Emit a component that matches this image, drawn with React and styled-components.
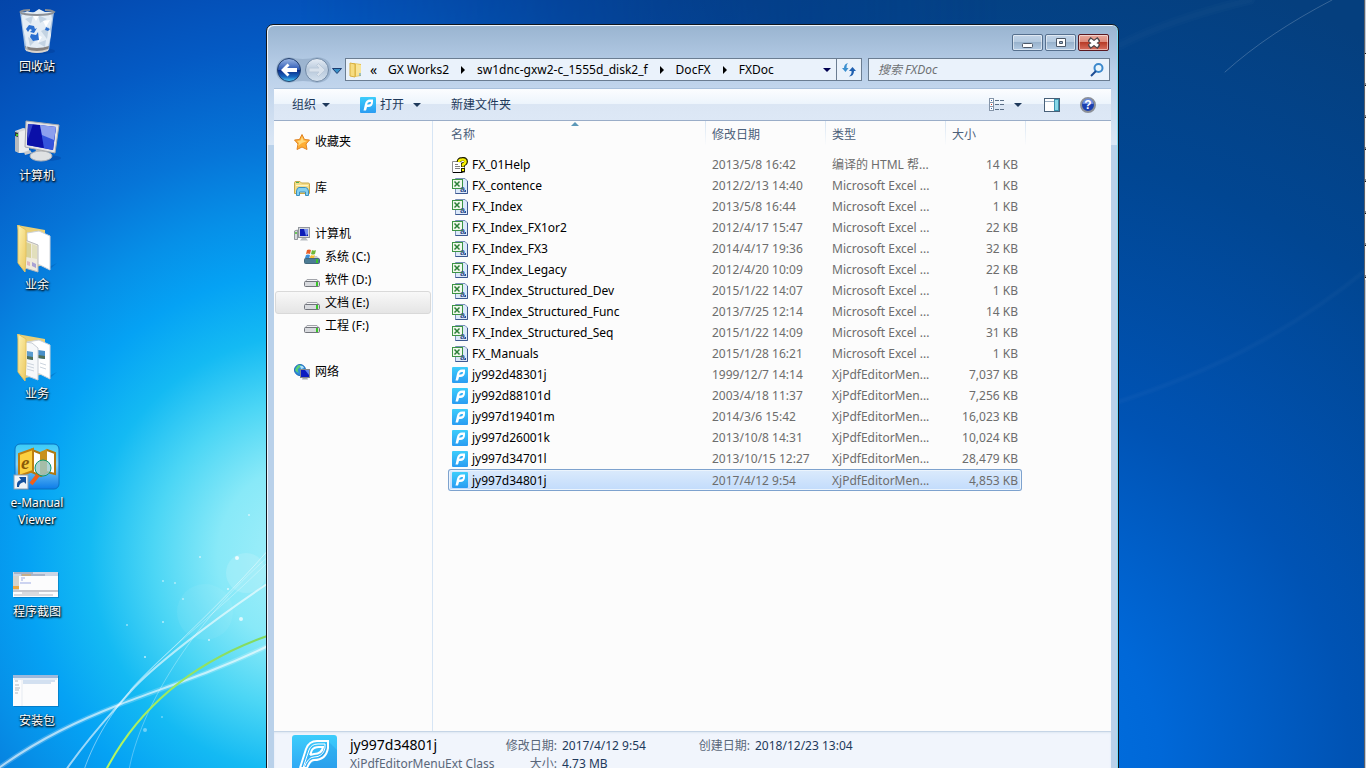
import React from 'react'
import styled, { createGlobalStyle, css } from 'styled-components';

const excel = 'Microsoft Excel ...';
const pdf = 'XjPdfEditorMen...';

const files = [
    { icon: 'help', name: 'FX_01Help', date: '2013/5/8 16:42', type: '编译的 HTML 帮...', size: '14 KB' },
    { icon: 'excel', name: 'FX_contence', date: '2012/2/13 14:40', type: excel, size: '1 KB' },
    { icon: 'excel', name: 'FX_Index', date: '2013/5/8 16:44', type: excel, size: '1 KB' },
    { icon: 'excel', name: 'FX_Index_FX1or2', date: '2012/4/17 15:47', type: excel, size: '22 KB' },
    { icon: 'excel', name: 'FX_Index_FX3', date: '2014/4/17 19:36', type: excel, size: '32 KB' },
    { icon: 'excel', name: 'FX_Index_Legacy', date: '2012/4/20 10:09', type: excel, size: '22 KB' },
    { icon: 'excel', name: 'FX_Index_Structured_Dev', date: '2015/1/22 14:07', type: excel, size: '1 KB' },
    { icon: 'excel', name: 'FX_Index_Structured_Func', date: '2013/7/25 12:14', type: excel, size: '14 KB' },
    { icon: 'excel', name: 'FX_Index_Structured_Seq', date: '2015/1/22 14:09', type: excel, size: '31 KB' },
    { icon: 'excel', name: 'FX_Manuals', date: '2015/1/28 16:21', type: excel, size: '1 KB' },
    { icon: 'pdf', name: 'jy992d48301j', date: '1999/12/7 14:14', type: pdf, size: '7,037 KB' },
    { icon: 'pdf', name: 'jy992d88101d', date: '2003/4/18 11:37', type: pdf, size: '7,256 KB' },
    { icon: 'pdf', name: 'jy997d19401m', date: '2014/3/6 15:42', type: pdf, size: '16,023 KB' },
    { icon: 'pdf', name: 'jy997d26001k', date: '2013/10/8 14:31', type: pdf, size: '10,024 KB' },
    { icon: 'pdf', name: 'jy997d34701l', date: '2013/10/15 12:27', type: pdf, size: '28,479 KB' },
    { icon: 'pdf', name: 'jy997d34801j', date: '2017/4/12 9:54', type: pdf, size: '4,853 KB' },
];

const crumbs = ['GX Works2', 'sw1dnc-gxw2-c_1555d_disk2_f', 'DocFX', 'FXDoc'];

/* ---------- drawings ---------- */

const Wallpaper = () => (
    <WallpaperSvg viewBox="0 0 1366 768" preserveAspectRatio="none" aria-hidden="true">
        <defs>
            <radialGradient id="glow" gradientUnits="userSpaceOnUse" cx="310" cy="555" r="710">
                <stop offset="0" stopColor="#a8f0fa" />
                <stop offset="0.13" stopColor="#88e9f8" />
                <stop offset="0.22" stopColor="#4cd6f5" />
                <stop offset="0.31" stopColor="#14baf3" />
                <stop offset="0.4" stopColor="#05a2f4" />
                <stop offset="0.48" stopColor="#0690e8" />
                <stop offset="0.58" stopColor="#0675d8" />
                <stop offset="0.72" stopColor="#045ac4" />
                <stop offset="0.86" stopColor="#0448ae" />
                <stop offset="1" stopColor="#033e9c" />
            </radialGradient>
            <radialGradient id="deep" gradientUnits="userSpaceOnUse" cx="980" cy="760" r="820">
                <stop offset="0" stopColor="#0074e4" />
                <stop offset="0.22" stopColor="#0068d8" />
                <stop offset="0.45" stopColor="#0053b4" />
                <stop offset="0.75" stopColor="#014692" />
                <stop offset="1" stopColor="#053f7e" />
            </radialGradient>
            <linearGradient id="fade" x1="0" x2="1" y1="0" y2="0">
                <stop offset="0" stopColor="#fff" stopOpacity="0" />
                <stop offset="1" stopColor="#fff" />
            </linearGradient>
            <mask id="right">
                <rect x="300" width="700" height="768" fill="url(#fade)" />
                <rect x="1000" width="366" height="768" fill="#fff" />
            </mask>
            <linearGradient id="grass" x1="0" y1="1" x2="1" y2="0">
                <stop offset="0" stopColor="#b8f860" />
                <stop offset="1" stopColor="#80d860" />
            </linearGradient>
            <linearGradient id="pdfBlue" x1="0" y1="0" x2="0" y2="1">
                <stop offset="0" stopColor="#3dcdfb" />
                <stop offset="1" stopColor="#2a9cf2" />
            </linearGradient>
            <linearGradient id="folder" x1="0" y1="0" x2="1" y2="1">
                <stop offset="0" stopColor="#fdf2b0" />
                <stop offset="1" stopColor="#ecc860" />
            </linearGradient>
        </defs>
        <rect width="1366" height="768" fill="url(#glow)" />
        <rect x="300" width="1066" height="768" fill="url(#deep)" mask="url(#right)" />
        <g fill="#fff">
            <circle cx="246" cy="573" r="20" opacity="0.14" />
            <circle cx="205" cy="612" r="28" opacity="0.06" />
            <circle cx="237" cy="558" r="2" opacity="0.8" />
            <circle cx="241" cy="619" r="2" opacity="0.7" />
            <circle cx="145" cy="730" r="2" opacity="0.4" />
            <circle cx="228" cy="589" r="1" opacity="0.7" />
            <circle cx="209" cy="640" r="1" opacity="0.7" />
            <circle cx="163" cy="581" r="1" opacity="0.5" />
            <circle cx="175" cy="583" r="1" opacity="0.5" />
            <circle cx="183" cy="599" r="1" opacity="0.5" />
            <circle cx="163" cy="622" r="1" opacity="0.6" />
            <circle cx="127" cy="625" r="1" opacity="0.5" />
            <circle cx="145" cy="657" r="1" opacity="0.7" />
            <circle cx="200" cy="557" r="1" opacity="0.6" />
            <circle cx="249" cy="515" r="1" opacity="0.6" />
            <circle cx="162" cy="717" r="1" opacity="0.4" />
        </g>
        <g fill="none" stroke="#fff" strokeLinecap="round">
            <path d="M-4 770 C40 738 80 720 121 704 S210 674 270 645" strokeWidth="5" opacity="0.2" />
            <path d="M-4 770 C40 738 80 720 121 704 S210 674 270 645" strokeWidth="2" opacity="0.6" />
            <path d="M66 770 C90 735 110 715 130 692 S210 622 270 582" strokeWidth="2" opacity="0.6" />
            <path d="M84 770 C95 738 115 705 145 675 S225 600 270 548" strokeWidth="1" opacity="0.45" />
            <path d="M129 770 C140 710 190 625 270 555" strokeWidth="1" opacity="0.3" />
            <path d="M130 690 C160 655 215 615 270 560" strokeWidth="1" opacity="0.3" />
            <path d="M1225 72 C1255 45 1290 22 1332 0" strokeWidth="1" opacity="0.2" />
            <path d="M1118 402 C1200 375 1280 340 1366 270" strokeWidth="6" opacity="0.015" />
            <path d="M1118 402 C1200 375 1280 340 1366 270" strokeWidth="3" opacity="0.015" />
            <path d="M1120 45 C1160 25 1200 12 1250 0" strokeWidth="10" opacity="0.015" />
            <path d="M1120 45 C1160 25 1200 12 1250 0" strokeWidth="5" opacity="0.015" />
        </g>
        <path d="M106 770 C140 705 195 661 270 635" fill="none" stroke="url(#grass)" strokeWidth="2" />
    </WallpaperSvg>
);

const RecycleIcon = () => (
    <BigSvg viewBox="0 0 48 48">
        <ellipse cx="28" cy="44" rx="14" ry="3" fill="#033a90" opacity="0.4" />
        <path d="M7 5 L41 5 L36 43 Q24 49 12 43 Z" fill="#b9cfe6" opacity="0.9" />
        <path d="M9 8 L14 4 L20 6 L26 2 L32 5 L38 5 L39 12 L37 22 L38 28 L35 40 Q24 44 14 40 L12 28 L10 20 Z" fill="#e4edf5" />
        <path d="M12 12 L20 9 L18 17 Z M25 8 L34 12 L27 16 Z M28 24 L36 20 L34 32 Z M15 30 L22 34 L17 39 Z M25 36 L33 33 L32 40 Z" fill="#c3d3e2" />
        <path d="M20 9 L27 7 L23 14 Z M30 14 L37 13 L33 20 Z M23 27 L29 30 L25 36 Z" fill="#fff" />
        <path d="M13 22 L16 18 L21 19 L22 22 L24 21 L21 26 L17 25 L19 23 L17 22 L15 25 Z M17 30 L18 27 L23 28 L25 25 L26 33 L20 34 Z M33 20 L37 22 L35 24 L32 23 Z" fill="#2a6fd0" />
        <path d="M12 39 Q24 43 36 39 L35 43 Q24 48 13 43 Z" fill="#85817e" />
        <path d="M13 42 Q24 46 35 42 L35 44 Q24 48 13 44 Z" fill="#d8d3ce" />
        <path d="M7 5 Q10 8 24 8 T41 5 Q38 3 32 3 M7 5 Q10 3 17 3" fill="none" stroke="#8c9096" strokeWidth="2" />
        <path d="M9 9 L14 42" stroke="#e6f0f8" opacity="0.8" />
    </BigSvg>
);

const ComputerIcon = () => (
    <BigSvg viewBox="0 0 48 48">
        <ellipse cx="34" cy="42" rx="14" ry="3" fill="#033a90" opacity="0.35" />
        <path d="M2 15 L10 12 L16 13 L16 36 L6 37 L2 35 Z" fill="#d8dadc" />
        <path d="M2 15 L6 16 L6 37 L2 35 Z" fill="#b6babe" />
        <path d="M6 16 L16 13 L16 36 L6 37 Z" fill="#eceeef" />
        <path d="M2 16 L5 17 L5 21 L2 20 Z" fill="#32343a" />
        <circle cx="4" cy="19" r="1" fill="#50f020" />
        <path d="M11 36 L17 34 L19 37 L12 39 Z" fill="#c9cbcd" />
        <path d="M23 33 L33 34 L34 40 L22 40 Z" fill="#b9bcc0" />
        <ellipse cx="28" cy="40" rx="11" ry="5" fill="#dfe1e3" stroke="#b2b4b8" />
        <path d="M13 5 L46 9 L42 37 L12 31 Z" fill="#e4e5e7" stroke="#a9abaf" />
        <path d="M15 8 L43 11 L40 34 L14 29 Z" fill="#1020c8" />
        <path d="M15 8 L27 9 L31 32 L14 29 Z" fill="#0a10a8" />
        <path d="M27 9 L43 11 L40 34 L31 32 Z" fill="#3454dc" />
        <path d="M27 9 L43 11 L41 24 L29 19 Z" fill="#a9b8f4" opacity="0.75" />
        <path d="M15 8 L20 8 L15 23 Z" fill="#4c60d8" opacity="0.6" />
    </BigSvg>
);

const FolderIcon = ({ pictures }) => (
    <BigSvg viewBox="0 0 48 48">
        <path d="M36 42 L44 38 L37 44 Z" fill="#024a98" opacity="0.3" />
        <path d="M4 0 L32 5 L32 40 L12 44 Z" fill="#e8cf78" />
        <path d="M14 8 L26 6 L37 11 L37 45 L27 40 L15 38 Z" fill="#fff" stroke="#cdd2d8" />
        {pictures ? (
            <>
                <path d="M25 16 L32 17 L32 25 L25 24 Z" fill="#4a90c8" />
                <path d="M25 21 L32 22 L32 25 L25 24 Z" fill="#4f6f58" />
                <path d="M12 8 L19 9 L25 14 L25 46 L12 41 Z" fill="#f6f8fa" stroke="#c6ccd4" />
                <path d="M14 17 L20 18 L20 26 L14 25 Z" fill="#5a9cd0" />
                <path d="M14 22 L20 23 L20 26 L14 25 Z" fill="#4f6f58" />
                <path d="M14 29 L21 31 M14 32 L21 34 M14 35 L21 37 M27 29 L33 31 M27 33 L33 35" stroke="#ccd4de" />
            </>
        ) : (
            <>
                <path d="M12 15 L25 20 L25 47 L12 43 Z" fill="#efeadc" stroke="#b9b9b9" />
                <path d="M13 17 L18 19 L18 33 L13 32 Z" fill="#d8d298" />
                <path d="M19 19 L24 21 L24 34 L19 33 Z" fill="#e2dfbc" />
                <path d="M14 36 L17 37 L17 41 L14 40 Z" fill="#e0b8c0" />
                <path d="M19 37 L23 39 L23 43 L19 41 Z" fill="#a9a2d4" />
            </>
        )}
        <path d="M5 0 L13 5 L13 30 L12 47 L5 38 Z" fill="url(#folder)" stroke="#e2c362" />
    </BigSvg>
);

const ManualIcon = () => (
    <BigSvg viewBox="0 2 48 48">
        <defs>
            <linearGradient id="tile" x1="0" y1="0" x2="0" y2="1">
                <stop offset="0" stopColor="#38ccf8" />
                <stop offset="0.45" stopColor="#84d4fa" />
                <stop offset="1" stopColor="#0c7ce8" />
            </linearGradient>
        </defs>
        <rect x="2" y="3" width="44" height="45" rx="5" fill="url(#tile)" stroke="#0a70c0" />
        <path d="M19 9 L29 13 L34 9 L42 12 L42 33 L34 31 L28 35 L19 31 Z" fill="#fff" stroke="#b07810" strokeWidth="2" />
        <path d="M27 11 L34 8 L34 31 L27 34 Z" fill="#c8901c" />
        <path d="M6 13 L20 8 L20 30 L6 35 Z" fill="#fcd040" stroke="#c08010" strokeWidth="2" />
        <text x="8" y="28" fontSize="19" fontWeight="700" fontStyle="italic" fontFamily="Liberation Serif, serif" fill="#8a5a08">e</text>
        <circle cx="30" cy="27" r="8" fill="#9cc8cc" fillOpacity="0.8" stroke="#109870" strokeWidth="1" />
        <path d="M25 34 L18 43" stroke="#f06018" strokeWidth="4" />
        <rect x="1" y="34" width="14" height="14" fill="#f0f4f8" stroke="#8aa0b4" />
        <path d="M4 46 Q3 40 8 39 L6 36 L13 36 L13 43 L11 41 Q6 42 6 46 Z" fill="#14509c" />
    </BigSvg>
);

const ThumbIcon = ({ tall }) => (
    <BigSvg viewBox="0 0 48 48">
        <rect x="1" y={tall ? 15 : 21} width="45" height={tall ? 31 : 25} fill="#024a88" opacity="0.35" />
        <rect y={tall ? 14 : 20} width="45" height={tall ? 31 : 25} fill="#fcfcfd" />
        {tall ? (
            <>
                <rect y="14" width="45" height="3" fill="#9db9dc" />
                <rect x="1" y="17" width="43" height="2" fill="#e3ecf6" />
                <path d="M10 20 H42 M10 22 H38" stroke="#a9c4e4" />
                <path d="M2 20 H5 M2 24 H6 M2 27 H7 M2 29 H6 M2 32 H5" stroke="#b4b9c0" />
                <path d="M9 18 V45" stroke="#e6ebf2" />
            </>
        ) : (
            <>
                <rect y="20" width="45" height="4" fill="#ccd5e4" />
                <path d="M1 21 H20 M8 23 H32" stroke="#8593ac" />
                <path d="M9 23 H18" stroke="#e0a850" />
                <rect y="24" width="6" height="15" fill="#d5d2cc" />
                <rect y="34" width="6" height="3" fill="#f0a840" />
                <path d="M8 26 H12 M8 28 H10 M7 31 H18" stroke="#9dabe4" />
                <rect y="38" width="45" height="2" fill="#c8c8ce" />
                <path d="M9 41 H26 M1 43 H40" stroke="#b8b8c0" />
            </>
        )}
    </BigSvg>
);

const PdfIcon = () => (
    <SmallSvg viewBox="0 0 16 16">
        <rect width="16" height="16" rx="1" fill="url(#pdfBlue)" />
        <path d="M3.500 13.500 L5 7 Q6 2.500 10 2.500 H13 V5 Q13 10 8 10 L7 10 Q6.500 12 6 13.500 Z" fill="#fff" />
        <path d="M7 7.500 Q7.500 5 9.500 5 H11 Q11 7.500 8.500 7.500 Z" fill="#32b0f6" />
    </SmallSvg>
);

const PdfLargeIcon = () => (
    <svg width="45" height="45" viewBox="0 0 45 45">
        <rect width="45" height="45" rx="3" fill="url(#pdfBlue)" />
        <path d="M36 6 L45 15 V45 H14 L12 34 L26 24 Z" fill="#1c84d8" opacity="0.25" />
        <g fill="none" stroke="#fff">
            <path d="M8 33 L14 14 Q17 6 25 6 H36 V13 Q34 25 22 25 Q18 25 15 33" strokeWidth="2" />
            <path d="M11 33 L17 15 Q19 9 26 9 H33 V13 Q31 22 22 22 Q16 22 12 33" strokeWidth="1" />
            <path d="M18 20 L20 15 Q22 12 27 12 H31 Q30 19 22 19 L18 20" strokeWidth="2" />
            <path d="M8 33 H15" strokeWidth="2" />
        </g>
    </svg>
);

const ExcelIcon = () => (
    <SmallSvg viewBox="0 0 16 16">
        <path d="M3.500 0.500 H13 L15.500 3 V15.500 H3.500 Z" fill="#dce9fa" stroke="#7890b8" />
        <path d="M15.500 3 V15.500 H3.500" fill="none" stroke="#3c5890" />
        <rect x="0.500" y="1.500" width="10" height="9" fill="#f0f8ec" stroke="#3c9444" />
        <path d="M2.500 3.500 L7.500 8.500 M7.500 3.500 L2.500 8.500" stroke="#2c8038" strokeWidth="1.500" />
        <text x="8" y="14" fontSize="9" fontWeight="700" fontFamily="Liberation Sans, sans-serif" fill="#34508c">a</text>
        <path d="M13.500 12 V14" stroke="#34508c" />
    </SmallSvg>
);

const HelpFileIcon = () => (
    <SmallSvg viewBox="0 0 16 16">
        <path d="M0.500 4.500 H9 L12.500 7 V15.500 H0.500 Z" fill="#fff" stroke="#909090" />
        <path d="M1 15.500 H10.500" fill="none" stroke="#000" />
        <path d="M3 7.500 H6 M3 9.500 H8 M3 11.500 H8" stroke="#808080" />
        <path d="M6.500 5 Q7 2 10 2 Q14 1.500 14 4.500 Q14 6.500 11 7.500 V10" fill="none" stroke="#202000" strokeWidth="4" />
        <path d="M7 5 Q7 2.500 10 2.500 Q13.500 2 13.500 4.500 Q13.500 6.500 11 7.500 V9.500" fill="none" stroke="#f8f000" strokeWidth="2.500" />
        <rect x="9.500" y="11.500" width="3" height="3" fill="#f8f000" stroke="#202000" />
    </SmallSvg>
);

const StarIcon = () => (
    <SmallSvg viewBox="0 0 16 16">
        <path d="M8 0.500 L10.500 5.500 L15.500 6 L12 10 L13 15.500 L8 13 L3 15.500 L4 10 L0.500 6 L5.500 5.500 Z" fill="#ffae34" stroke="#e08424" />
        <path d="M8 2.500 L9.500 6.500 L13 7 L8 9 L4 12 L5 9 L3 7 L6.500 6.500 Z" fill="#ffe490" opacity="0.8" />
    </SmallSvg>
);

const LibraryIcon = () => (
    <SmallSvg viewBox="0 0 16 16">
        <path d="M0.500 2.500 Q0.500 1.500 2 1.500 H6 L7.500 3 H14 Q15.500 3 15.500 4 V13.500 H0.500 Z" fill="#f4dc88" stroke="#c8a848" />
        <path d="M2 5.500 H14" stroke="#fff4c0" />
        <path d="M2 2.500 H5" stroke="#50b050" />
        <path d="M2.500 15.500 V11 Q3 7.500 5 7.500 H11.500 Q14 7.500 14.500 11 V15.500 H11.500 V12 H5.500 V15.500 Z" fill="#84d0f0" stroke="#3c90c0" />
    </SmallSvg>
);

const SmallComputerIcon = () => (
    <SmallSvg viewBox="0 0 16 16">
        <path d="M0.500 5 L3.500 4 V13.500 H0.500 Z" fill="#d8dade" stroke="#93979d" />
        <circle cx="2" cy="7" r="1" fill="#48c030" />
        <path d="M8 12 H12 L14 14.500 H6 Z" fill="#b8bcc2" />
        <rect x="4.500" y="1.500" width="11" height="10" fill="#d6d9de" stroke="#93979d" />
        <rect x="6" y="3" width="8" height="7" fill="#0c1cb8" />
        <path d="M10 3 H14 V8 L12 10 Z" fill="#7890ec" />
    </SmallSvg>
);

const DriveIcon = ({ system }) => (
    <SmallSvg viewBox="0 0 16 16">
        <path d="M3 7.500 H13 L15 10 H1 Z" fill={system ? '#9cb4c4' : '#f4f4f6'} stroke="#a2a4aa" opacity={system ? 0.6 : 1} />
        <rect x="0.500" y="9.500" width="15" height="5" rx="1" fill={system ? '#4c7c94' : '#d8dade'} stroke={system ? '#44687c' : '#72757c'} />
        <rect x="12" y="10" width="2" height="4" fill="#38c428" />
        {system && (
            <>
                <path d="M3 1 Q5 0 7 1 L6 5 Q4 4 2 5 Z" fill="#e86028" />
                <path d="M8 1 Q10 2 12 1 L11 5 Q9 6 7 5 Z" fill="#70b838" />
                <path d="M2 6 Q4 5 6 6 L5 9 H1 Z" fill="#3c90d8" />
                <path d="M7 6 Q9 7 11 6 L10 9 H6 Z" fill="#f8c030" />
            </>
        )}
    </SmallSvg>
);

const NetworkIcon = () => (
    <SmallSvg viewBox="0 0 16 16">
        <circle cx="6" cy="6" r="5.500" fill="#2c8cdc" stroke="#1c68b8" />
        <path d="M2 4 Q4 0 7 1 Q6 4 4 5 Q3 7 5 9 Q2 8 1 6 Z" fill="#5cd070" />
        <path d="M6 2 Q9 1 10 4 L7 5 Z" fill="#b0e4f8" />
        <path d="M9 13 H13 L14 15.500 H8 Z" fill="#a8acb2" />
        <rect x="6.500" y="5.500" width="9" height="8" fill="#c8ccd2" stroke="#83878d" />
        <rect x="7" y="6" width="8" height="7" fill="#0c1cc0" />
        <path d="M11 6 H15 V11 Z" fill="#6484ec" />
    </SmallSvg>
);

const BackIcon = () => (
    <svg width="68" height="26" viewBox="0 0 68 26">
        <defs>
            <linearGradient id="back" x1="0" y1="0" x2="0" y2="1">
                <stop offset="0" stopColor="#9cb8e4" />
                <stop offset="0.48" stopColor="#2c58b4" />
                <stop offset="0.52" stopColor="#0c2c88" />
                <stop offset="0.8" stopColor="#1868c0" />
                <stop offset="1" stopColor="#58d4f8" />
            </linearGradient>
            <linearGradient id="forward" x1="0" y1="0" x2="0" y2="1">
                <stop offset="0" stopColor="#e6edf5" />
                <stop offset="0.5" stopColor="#b8c9dc" />
                <stop offset="1" stopColor="#d6e2ee" />
            </linearGradient>
        </defs>
        <path d="M14 0 Q28 4 42 0 Q56 1 56 13 Q55 25 42 26 Q28 22 14 26 Q1 24 1 13 Q2 1 14 0" fill="#8ca5c2" opacity="0.6" />
        <circle cx="14" cy="13" r="11.500" fill="url(#back)" stroke="#23406e" />
        <path d="M6 13 L12.500 6.500 L14.500 8.500 L12 11 H22 V15 H12 L14.500 17.500 L12.500 19.500 Z" fill="#fff" />
        <circle cx="42" cy="13" r="11.500" fill="url(#forward)" stroke="#7089a6" />
        <path d="M50 13 L43.500 6.500 L41.500 8.500 L44 11 H34 V15 H44 L41.500 17.500 L43.500 19.500 Z" fill="#d9e2ec" stroke="#bccada" />
        <path d="M57.500 11.500 H66.500 L62 16.500 Z" fill="#3890c8" stroke="#1c3c70" />
    </svg>
);

const AddressFolderIcon = () => (
    <SmallSvg viewBox="0 0 16 16">
        <path d="M5 1 L13 2 V14 L6 15 Z" fill="#e4c050" />
        <path d="M8 2 L13 3 V13 L8 14 Z" fill="#f8e498" />
        <path d="M2 1 L7 2 V15 L2 14 Z" fill="#f6dc80" stroke="#d8b040" />
        <path d="M12 11 V14" stroke="#48a0e0" />
    </SmallSvg>
);

const RefreshIcon = () => (
    <SmallSvg viewBox="0 0 16 16">
        <path d="M1 6 H3 Q3 2 7 1 Q5 3 5.500 6 H7.500 L4.500 10 Z" fill="#3c90d0" />
        <path d="M15 9 L11.500 5 L8 9 H10.500 Q11 12 8 14.500 Q13 14 13 9 Z" fill="#2060b0" />
    </SmallSvg>
);

const SearchIcon = () => (
    <SmallSvg viewBox="0 0 16 16">
        <circle cx="9.500" cy="6" r="4" fill="#eaf6fc" stroke="#3c88cc" strokeWidth="2" />
        <path d="M7 9 L2 14" stroke="#1c4c94" strokeWidth="2" />
    </SmallSvg>
);

const ViewsIcon = () => (
    <SmallSvg viewBox="0 0 16 16">
        <g fill="#fff" stroke="#8494a8">
            <rect x="0.500" y="1.500" width="4" height="4" />
            <rect x="0.500" y="5.500" width="4" height="4" />
            <rect x="0.500" y="9.500" width="4" height="4" />
        </g>
        <path d="M6 3.500 H10 M11 3.500 H15 M6 7.500 H10 M11 7.500 H15 M6 12.500 H10 M11 12.500 H15" stroke="#5c7088" />
        <path d="M2 3.500 H3 M2 11.500 H3" stroke="#3868b0" />
        <path d="M2 7.500 H3" stroke="#d03828" />
    </SmallSvg>
);

const PaneIcon = () => (
    <SmallSvg viewBox="0 0 16 16">
        <rect x="0.500" y="1.500" width="15" height="13" fill="#fff" stroke="#486078" />
        <path d="M1 4.500 H10" stroke="#9cb0c4" />
        <rect x="10.500" y="2.500" width="4" height="11" fill="#88d8e8" stroke="#3c94b0" />
    </SmallSvg>
);

const HelpIcon = () => (
    <SmallSvg viewBox="0 0 16 16">
        <circle cx="8" cy="8" r="7" fill="#1c40b0" stroke="#8c9098" strokeWidth="2" />
        <path d="M2.500 7 A5.500 5.500 0 0 1 13.500 7 Z" fill="#6c8cdc" />
        <text x="8" y="12" textAnchor="middle" fontSize="12" fontWeight="700" fontFamily="Liberation Sans, sans-serif" fill="#fff">?</text>
    </SmallSvg>
);

const SmallArrow = ({ color = '#1e395b' }) => (
    <svg width="8" height="4" viewBox="0 0 8 4" aria-hidden="true">
        <path d="M0 0 H8 L4 4 Z" fill={color} />
    </svg>
);

const CrumbArrow = () => (
    <CrumbArrowSvg viewBox="0 0 4 8" aria-hidden="true">
        <path d="M0 0 V8 L4 4 Z" fill="#000" />
    </CrumbArrowSvg>
);

const fileIcons = { help: <HelpFileIcon />, excel: <ExcelIcon />, pdf: <PdfIcon /> };

const shortcuts = [
    { label: '回收站', icon: <RecycleIcon /> },
    { label: '计算机', icon: <ComputerIcon /> },
    { label: '业余', icon: <FolderIcon /> },
    { label: '业务', icon: <FolderIcon pictures /> },
    { label: 'e-Manual Viewer', icon: <ManualIcon /> },
    { label: '程序截图', icon: <ThumbIcon /> },
    { label: '安装包', icon: <ThumbIcon tall /> },
];

const places = [
    [{ label: '收藏夹', icon: <StarIcon /> }],
    [{ label: '库', icon: <LibraryIcon /> }],
    [
        { label: '计算机', icon: <SmallComputerIcon /> },
        { label: '系统 (C:)', icon: <DriveIcon system />, child: true },
        { label: '软件 (D:)', icon: <DriveIcon />, child: true },
        { label: '文档 (E:)', icon: <DriveIcon />, child: true, active: true },
        { label: '工程 (F:)', icon: <DriveIcon />, child: true },
    ],
    [{ label: '网络', icon: <NetworkIcon /> }],
];

export default function App() {

    return (
        <Desktop>
            <GlobalStyle />
            <Wallpaper />
            <ShortcutList>
                {shortcuts.map((item) => (
                    <Shortcut key={item.label} type="button">
                        {item.icon}
                        <ShortcutLabel>{item.label}</ShortcutLabel>
                    </Shortcut>
                ))}
            </ShortcutList>

            <Window>
                <TitleBar>
                    <CaptionButton type="button" aria-label="最小化">
                        <svg width="12" height="12" viewBox="0 0 12 12"><rect x="0.500" y="6.500" width="10" height="4" rx="1" fill="#fff" stroke="#4c5868" /></svg>
                    </CaptionButton>
                    <CaptionButton type="button" aria-label="最大化">
                        <svg width="12" height="12" viewBox="0 0 12 12"><path d="M1.500 1.500 H10.500 V9.500 H1.500 Z M4.500 4.500 V6.500 H7.500 V4.500 Z" fill="#fff" fillRule="evenodd" stroke="#4c5868" /></svg>
                    </CaptionButton>
                    <CaptionButton type="button" aria-label="关闭" $close>
                        <svg width="12" height="12" viewBox="0 0 12 12">
                            <path d="M1 2 L11 10 M11 2 L1 10" stroke="#4a4448" strokeWidth="5" />
                            <path d="M2 3 L10 9 M10 3 L2 9" stroke="#fff" strokeWidth="3" />
                        </svg>
                    </CaptionButton>
                </TitleBar>

                <NavBar>
                    <HistoryButton type="button" aria-label="后退"><BackIcon /></HistoryButton>
                    <AddressBar>
                        <AddressFolderIcon />
                        <Chevrons>«</Chevrons>
                        {crumbs.map((crumb, i) => (
                            <React.Fragment key={crumb}>
                                {i > 0 && <CrumbArrow />}
                                <Crumb type="button">{crumb}</Crumb>
                            </React.Fragment>
                        ))}
                        <AddressDrop type="button" aria-label="以前的位置"><SmallArrow color="#000050" /></AddressDrop>
                        <RefreshButton type="button" aria-label="刷新"><RefreshIcon /></RefreshButton>
                    </AddressBar>
                    <SearchBox>
                        <SearchInput type="search" placeholder="搜索 FXDoc" aria-label="搜索 FXDoc" />
                        <SearchIcon />
                    </SearchBox>
                </NavBar>

                <Toolbar>
                    <ToolButton type="button">组织<SmallArrow /></ToolButton>
                    <ToolButton type="button"><OpenLabel><PdfIcon />打开</OpenLabel><SmallArrow /></ToolButton>
                    <ToolButton type="button">新建文件夹</ToolButton>
                    <ToolEnd>
                        <ToolButton type="button" aria-label="更改您的视图" $wide><ViewsIcon /><SmallArrow /></ToolButton>
                        <ToolButton type="button" aria-label="预览窗格"><PaneIcon /></ToolButton>
                        <ToolButton type="button" aria-label="帮助"><HelpIcon /></ToolButton>
                    </ToolEnd>
                </Toolbar>

                <Body>
                    <Sidebar>
                        {places.map((group) => (
                            <PlaceGroup key={group[0].label}>
                                {group.map((place) => (
                                    <Place key={place.label} href="#" $child={place.child} $active={place.active}>
                                        {place.icon}
                                        {place.label}
                                    </Place>
                                ))}
                            </PlaceGroup>
                        ))}
                    </Sidebar>
                    <FileTable>
                        <thead>
                            <HeadRow>
                                <HeadCell><HeadButton type="button">名称</HeadButton><SortMark viewBox="0 0 8 4"><path d="M0 4 L4 0 L8 4 Z" fill="#5c98b8" /></SortMark></HeadCell>
                                <HeadCell><HeadButton type="button">修改日期</HeadButton></HeadCell>
                                <HeadCell><HeadButton type="button">类型</HeadButton></HeadCell>
                                <HeadCell><HeadButton type="button">大小</HeadButton></HeadCell>
                            </HeadRow>
                        </thead>
                        <tbody>
                            {files.map((file) => (
                                <FileRow key={file.name} $selected={file.name === 'jy997d34801j'}>
                                    <NameCell>{fileIcons[file.icon]}{file.name}</NameCell>
                                    <FileCell>{file.date}</FileCell>
                                    <FileCell>{file.type}</FileCell>
                                    <FileCell $right>{file.size}</FileCell>
                                </FileRow>
                            ))}
                        </tbody>
                    </FileTable>
                </Body>

                <Details>
                    <PdfLargeIcon />
                    <DetailsTitle>
                        <DetailsName>jy997d34801j</DetailsName>
                        <div>XjPdfEditorMenuExt Class</div>
                    </DetailsTitle>
                    <DetailsList>
                        <dt>修改日期:</dt>
                        <dd>2017/4/12 9:54</dd>
                        <dt>大小:</dt>
                        <dd>4.73 MB</dd>
                    </DetailsList>
                    <DetailsList>
                        <dt>创建日期:</dt>
                        <dd>2018/12/23 13:04</dd>
                    </DetailsList>
                </Details>
            </Window>
            <ScreenEdge />
        </Desktop>
    );
}

const GlobalStyle = createGlobalStyle`
    * {
        box-sizing: border-box;
    }

    body {
        margin: 0;
        font-family: "Noto Sans", "Noto Sans CJK SC", sans-serif;
        font-size: 12px;
        line-height: 17px;
        overflow: hidden;
    }

    button, input {
        font: inherit;
        color: inherit;
        border: 0;
        padding: 0;
        background: none;
    }
`;

const Desktop = styled.main`
    position: relative;
    height: 100vh;
    overflow: hidden;
    background: #0460c8;
`;

const WallpaperSvg = styled.svg`
    position: absolute;
    inset: 0;
    width: 100%;
    height: 100%;
`;

const BigSvg = styled.svg`
    width: 48px;
    height: 48px;
    flex: none;
`;

const SmallSvg = styled.svg`
    width: 16px;
    height: 16px;
    flex: none;
`;

const ShortcutList = styled.div`
    position: relative;
    display: flex;
    flex-direction: column;
    width: 74px;
`;

const Shortcut = styled.button`
    display: flex;
    flex-direction: column;
    align-items: center;
    gap: 3px;
    height: 109px;
    padding-top: 7px;
`;

const ShortcutLabel = styled.span`
    width: 64px;
    color: #fff;
    text-align: center;
    text-shadow: 1px 1px 2px #000, 0 1px 2px #000;
`;

const Window = styled.section`
    position: absolute;
    top: 24px;
    left: 266px;
    right: 247px;
    bottom: -28px;
    display: flex;
    flex-direction: column;
    padding: 0 7px;
    border: 1px solid #10161e;
    border-radius: 7px 7px 0 0;
    box-shadow: inset 1px 1px 0 #eef6fd, inset -1px 0 0 #7fdcf4;
    background:
        linear-gradient(#99b4d0, #b9cfe9 45px, #dbe7f5 120px) no-repeat 0 0 / 100% 120px,
        #b9d1ea;
`;

const TitleBar = styled.header`
    display: flex;
    justify-content: flex-end;
    gap: 2px;
    height: 33px;
    padding: 9px 2px 0 0;
`;

const CaptionButton = styled.button`
    display: flex;
    align-items: center;
    justify-content: center;
    width: 31px;
    height: 17px;
    border: 1px solid #56708e;
    border-radius: 2px;
    box-shadow: inset 0 0 0 1px rgba(255, 255, 255, 0.5);
    background: linear-gradient(#c2d4e8, #b2c8de 50%, #98b2cc 50%, #b4cce4);

    ${({ $close }) => $close && css`
        border-color: #5a1820;
        background: linear-gradient(#e8a89c, #dc8878 50%, #b83c28 50%, #d87060);
    `}
`;

const NavBar = styled.nav`
    display: flex;
    align-items: center;
    height: 30px;
    padding: 0 1px 7px 1px;
`;

const HistoryButton = styled.button`
    display: flex;
    margin-right: 2px;
`;

const AddressBar = styled.div`
    display: flex;
    flex: 1;
    align-items: center;
    gap: 5px;
    height: 23px;
    min-width: 0;
    margin-right: 6px;
    padding-left: 2px;
    border: 1px solid #6b7d92;
    background: #eaf2fb;
    color: #000;
`;

const Chevrons = styled.span`
    width: 9px;
    font-size: 14px;
    text-align: center;
`;

const Crumb = styled.button`
    padding: 0 5px;
    white-space: nowrap;
`;

const CrumbArrowSvg = styled.svg`
    flex: none;
    width: 4px;
    height: 8px;
    margin: 0 2px;
`;

const AddressDrop = styled.button`
    display: flex;
    align-items: center;
    height: 21px;
    margin-left: auto;
`;

const RefreshButton = styled.button`
    display: flex;
    align-items: center;
    justify-content: center;
    width: 25px;
    height: 21px;
    border-left: 1px solid #6b7d92;
`;

const SearchBox = styled.label`
    display: flex;
    align-items: center;
    width: 242px;
    height: 23px;
    padding: 0 4px 0 9px;
    border: 1px solid #6b7d92;
    background: #eaf2fb;
`;

const SearchInput = styled.input`
    flex: 1;
    min-width: 0;
    outline: none;

    &::placeholder {
        color: #6e7174;
        font-style: italic;
        opacity: 1;
    }
`;

const Toolbar = styled.div`
    display: flex;
    align-items: center;
    gap: 30px;
    height: 33px;
    padding: 0 15px 0 18px;
    border-top: 1px solid #a8c0dc;
    border-bottom: 1px solid #9aadc8;
    background: linear-gradient(#fcfdff, #ecf4fc 50%, #dbe6f4 50%, #dde8f6);
    color: #1e395b;
`;

const ToolButton = styled.button`
    display: flex;
    align-items: center;
    gap: ${({ $wide }) => ($wide ? '9px' : '6px')};
    margin-right: ${({ $wide }) => ($wide ? '2px' : '0')};
`;

const OpenLabel = styled.span`
    display: flex;
    align-items: center;
    gap: 4px;
    padding-right: 3px;
`;

const ToolEnd = styled.div`
    display: flex;
    gap: 20px;
    margin-left: auto;
`;

const Body = styled.div`
    display: flex;
    flex: 1;
    min-height: 0;
    background: #fcfcfc;
`;

const Sidebar = styled.nav`
    display: flex;
    flex-direction: column;
    gap: 23px;
    width: 159px;
    padding: 9px 1px 0;
    border-right: 1px solid #d6e5f5;
`;

const PlaceGroup = styled.div`
    display: flex;
    flex-direction: column;
`;

const Place = styled.a`
    display: flex;
    align-items: center;
    gap: 5px;
    height: 23px;
    padding-left: ${({ $child }) => ($child ? '28px' : '18px')};
    border: 1px solid ${({ $active }) => ($active ? '#d9d9d9' : 'transparent')};
    border-radius: 3px;
    background: ${({ $active }) => ($active ? 'linear-gradient(#f8f8f8, #e5e5e5)' : 'none')};
    color: #000;
    text-decoration: none;
`;

const FileTable = styled.table`
    display: block;
    margin-left: 15px;
    border-collapse: collapse;
`;

const HeadRow = styled.tr`
    display: grid;
    grid-template-columns: 258px 120px 120px 80px;
    height: 33px;
`;

const HeadCell = styled.th`
    position: relative;
    height: 24px;
    padding: 5px 0 0 6px;
    border-right: 1px solid;
    border-image: linear-gradient(#d5e3f2, #fcfcfc) 1;
    color: #4c607a;
    font-weight: 400;
    text-align: left;

    &:first-child {
        padding-left: 3px;
    }
`;

const HeadButton = styled.button`
    display: block;
`;

const SortMark = styled.svg`
    position: absolute;
    top: 1px;
    left: calc(50% - 6px);
    width: 8px;
    height: 4px;
`;

const FileRow = styled.tr`
    display: grid;
    grid-template-columns: 257px 120px 120px 77px;
    align-items: center;
    width: 574px;
    height: 21px;
    border-radius: 3px;

    ${({ $selected }) => $selected && css`
        height: 22px;
        box-shadow: inset 0 0 0 1px #7da2ce, inset 0 0 0 2px #ebf4fd;
        background: linear-gradient(#dcebfc, #c1dbfc);
    `}
`;

const FileCell = styled.td`
    padding: 0 4px 0 7px;
    color: #6d6d6d;
    text-align: ${({ $right }) => ($right ? 'right' : 'left')};
    white-space: nowrap;
`;

const NameCell = styled.td`
    display: flex;
    align-items: center;
    gap: 4px;
    padding: 0 0 0 4px;
    color: #000;
`;

const Details = styled.footer`
    display: flex;
    height: 64px;
    padding: 3px 18px;
    border-top: 1px solid #c6d5e6;
    box-shadow: inset 0 1px 2px #dde7f2;
    background: #f1f5fc;
    color: #5a6779;
`;

const DetailsTitle = styled.div`
    width: 143px;
    margin-left: 13px;
    padding-top: 1px;
    white-space: nowrap;
`;

const DetailsName = styled.div`
    margin-bottom: 2px;
    color: #000;
    font-size: 14px;
`;

const DetailsList = styled.dl`
    display: grid;
    grid-template-columns: 64px auto;
    grid-auto-rows: 18px;
    column-gap: 5px;
    width: 193px;
    margin: 0;
    padding-top: 2px;
    white-space: nowrap;

    dt {
        text-align: right;
    }

    dd {
        margin: 0;
        color: #1e395b;
    }
`;

/* sliver of a second window docked at the right side */
const ScreenEdge = styled.div`
    position: absolute;
    top: 0;
    right: 0;
    bottom: 0;
    width: 2px;
    border-left: 1px solid #5b6068;
    background:
        repeating-linear-gradient(#101418 0 1px, #f4f6f8 1px 30px, #8c9096 30px 32px) no-repeat 0 53px / 100% 227px,
        #c3ccd8;
`;
